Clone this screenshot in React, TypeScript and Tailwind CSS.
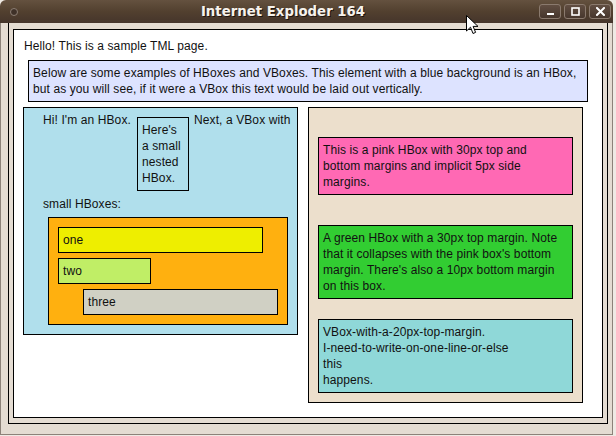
const boxText = "border border-black p-[4px] whitespace-nowrap";

function TitleBar() {
  return (
    <div className="h-[23px] flex items-center bg-linear-to-b from-[#64513f] via-[#52402f] to-[#45352b]">
      <div className="w-[27px] flex items-center justify-center">
        <div className="w-[8px] h-[8px] rounded-full border border-[#8c7e73] bg-[#3f3128]" />
      </div>
      <div className="flex-1 text-center font-['DejaVu_Sans',sans-serif] font-bold text-[13.3px] leading-[16px] tracking-normal text-[#f6f2ec] [text-shadow:1px_1px_0_#1e140e]">
        Internet Exploder 164
      </div>
      <div className="flex gap-[3px] pr-[2px]">
        <div className="w-[22px] h-[15px] rounded-[3px] border border-[#8a7a6e] bg-linear-to-b from-[#614e42] to-[#47372d] flex items-center justify-center">
          <svg width="9" height="9" viewBox="0 0 9 9">
            <rect x="1" y="6" width="7" height="2" fill="#fff" />
          </svg>
        </div>
        <div className="w-[22px] h-[15px] rounded-[3px] border border-[#8a7a6e] bg-linear-to-b from-[#614e42] to-[#47372d] flex items-center justify-center">
          <svg width="9" height="9" viewBox="0 0 9 9">
            <rect x="1" y="1" width="7" height="7" fill="none" stroke="#fff" strokeWidth="1.6" />
          </svg>
        </div>
        <div className="w-[22px] h-[15px] rounded-[3px] border border-[#8a7a6e] bg-linear-to-b from-[#614e42] to-[#47372d] flex items-center justify-center">
          <svg width="9" height="9" viewBox="0 0 9 9">
            <path d="M1 1 L8 8 M8 1 L1 8" stroke="#fff" strokeWidth="2" strokeLinecap="square" />
          </svg>
        </div>
      </div>
    </div>
  );
}

function LeftBox() {
  return (
    <div className="w-[275px] h-[228px] border border-black bg-[#b0dfec] pl-[19px] pt-[4px]">
      <div className="flex items-start">
        <span className="w-[94px] whitespace-nowrap">Hi! I'm an HBox.</span>
        <div className={`mt-[5px] w-[52px] ${boxText}`}>
          Here's<br />a small<br />nested<br />HBox.
        </div>
        <span className="ml-[5px] whitespace-nowrap">Next, a VBox with</span>
      </div>
      <div className="mt-[5px] whitespace-nowrap">small HBoxes:</div>
      <div className="mt-[5px] ml-[5px] w-[240px] border border-black bg-[#ffb00f] p-[9px]">
        <div className={`w-[205px] bg-[#eeee00] ${boxText}`}>one</div>
        <div className={`mt-[5px] w-[93px] bg-[#c0ee66] ${boxText}`}>two</div>
        <div className={`mt-[5px] ml-[25px] w-[195px] bg-[#d0d0c4] ${boxText}`}>three</div>
      </div>
    </div>
  );
}

function RightBox() {
  return (
    <div className="ml-[10px] w-[275px] h-[296px] border border-black bg-[#ecdfcc] pt-[29px] pl-[9px]">
      <div className={`w-[255px] bg-[#ff69b4] ${boxText}`}>
        This is a pink HBox with 30px top and<br />
        bottom margins and implicit 5px side<br />
        margins.
      </div>
      <div className={`mt-[30px] w-[255px] bg-[#32cd32] ${boxText}`}>
        A green HBox with a 30px top margin. Note<br />
        that it collapses with the pink box's bottom<br />
        margin. There's also a 10px bottom margin<br />
        on this box.
      </div>
      <div className={`mt-[20px] w-[255px] bg-[#8fd8d8] ${boxText}`}>
        VBox-with-a-20px-top-margin.<br />
        I-need-to-write-on-one-line-or-else<br />
        this<br />
        happens.
      </div>
    </div>
  );
}

export default function App() {
  return (
    <div className="relative w-[616px] h-[436px] bg-[#efeae4] font-['Liberation_Sans',Arial,sans-serif] text-[12px] tracking-[0.1px] leading-[16px] text-[#111]">
      <div className="w-[613px] h-[435px] flex flex-col rounded-t-[6px] overflow-hidden">
        <TitleBar />
        <div className="flex-1 flex flex-col bg-[#e4dcd2] border-x border-b border-[#8c8279] pl-[7px] pr-[4px] pb-[10px]">
          <div className="flex-1 flex flex-col border-x border-b border-black pt-[6px] px-[4px] pb-[5px]">
            <div className="flex-1 border border-black bg-white">
              <div className="ml-[10px] mt-[8px] whitespace-nowrap">Hello! This is a sample TML page.</div>
              <div className="ml-[14px] mt-[6px] w-[560px] border border-black bg-[#dde3ff] p-[4px] whitespace-nowrap">
                Below are some examples of HBoxes and VBoxes. This element with a blue background is an HBox,<br />
                but as you will see, if it were a VBox this text would be laid out vertically.
              </div>
              <div className="mt-[5px] ml-[9px] flex items-start">
                <LeftBox />
                <RightBox />
              </div>
            </div>
          </div>
        </div>
      </div>
      <svg className="absolute left-[466px] top-[15px]" width="14" height="21" viewBox="0 0 14 21">
        <polygon
          points="0.5,0.5 0.5,16 4.5,12.2 7,18.5 9.6,17.4 7.1,11.4 12,11.4"
          fill="#fff"
          stroke="#000"
          strokeWidth="1"
          strokeLinejoin="round"
        />
      </svg>
    </div>
  );
}
